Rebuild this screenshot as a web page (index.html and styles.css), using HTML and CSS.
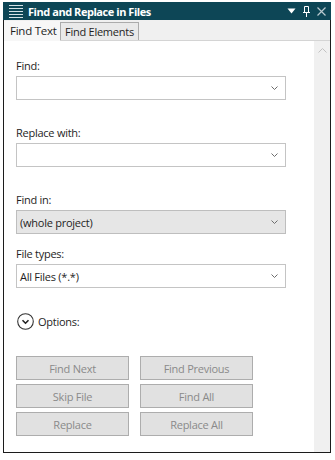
FILE: index.html
```html
<!DOCTYPE html>
<html lang="en">
<head>
   <meta charset="UTF-8">
   <meta name="viewport" content="width=device-width, initial-scale=1.0">
   <title>Find and Replace in Files</title>
   <link rel="stylesheet" href="styles.css">
</head>
<body>
   <div class="window">
      <div class="title-bar">
         <svg class="menu-icon" width="14" height="14" viewBox="0 0 14 14">
            <path d="M0 1.5h14M0 4.5h14M0 7.5h14M0 10.5h14M0 13.5h14" stroke="#d6e2e6" stroke-width="1"/>
         </svg>
         <span class="title">Find and Replace in Files</span>
         <div class="title-tools">
            <svg width="9" height="6" viewBox="0 0 9 6"><path d="M0.5 0.5h8l-4 5z" fill="#ffffff"/></svg>
            <svg width="7" height="11" viewBox="0 0 7 11"><path d="M1.5 0.5v6M5.5 0.5v6M1.5 0.5h4M0 6.5h7M3.5 6.5v4.5" stroke="#ffffff" stroke-width="1" fill="none"/></svg>
            <svg width="9" height="9" viewBox="0 0 9 9"><path d="M0.5 0.5l8 8M8.5 0.5l-8 8" stroke="#b9c9cf" stroke-width="1.2"/></svg>
         </div>
      </div>
      <div class="tab-strip">
         <div class="tab active">Find Text</div>
         <div class="tab">Find Elements</div>
      </div>
      <div class="body">
         <div class="panel">
            <div class="field">
               <label>Find:</label>
               <div class="combo"><span></span><svg class="chev" width="7" height="4" viewBox="0 0 7 4"><path d="M0.5 0.5l3 3 3-3" stroke="#6d6d6d" fill="none"/></svg></div>
            </div>
            <div class="field">
               <label>Replace with:</label>
               <div class="combo"><span></span><svg class="chev" width="7" height="4" viewBox="0 0 7 4"><path d="M0.5 0.5l3 3 3-3" stroke="#6d6d6d" fill="none"/></svg></div>
            </div>
            <div class="field tight">
               <label>Find in:</label>
               <div class="combo readonly"><span>(whole project)</span><svg class="chev" width="7" height="4" viewBox="0 0 7 4"><path d="M0.5 0.5l3 3 3-3" stroke="#6d6d6d" fill="none"/></svg></div>
            </div>
            <div class="field">
               <label>File types:</label>
               <div class="combo"><span>All Files (*.*)</span><svg class="chev" width="7" height="4" viewBox="0 0 7 4"><path d="M0.5 0.5l3 3 3-3" stroke="#6d6d6d" fill="none"/></svg></div>
            </div>
            <div class="options">
               <svg width="17" height="17" viewBox="0 0 17 17">
                  <circle cx="8.5" cy="8.5" r="7.8" stroke="#333333" stroke-width="1.1" fill="none"/>
                  <path d="M5.5 7.2l3 3 3-3" stroke="#222222" stroke-width="1.6" fill="none"/>
               </svg>
               <span>Options:</span>
            </div>
            <div class="buttons">
               <button disabled>Find Next</button>
               <button disabled>Find Previous</button>
               <button disabled>Skip File</button>
               <button disabled>Find All</button>
               <button disabled>Replace</button>
               <button disabled>Replace All</button>
            </div>
         </div>
         <div class="scrollbar">
            <svg width="9" height="5" viewBox="0 0 9 5"><path d="M0.5 4.5l4-4 4 4" stroke="#c2c2c2" fill="none"/></svg>
         </div>
      </div>
   </div>
</body>
</html>
```

FILE: styles.css
```css
body {
   margin: 0;
   background: #ffffff;
   font-family: "Open Sans", "Noto Sans", sans-serif;
   font-size: 11px;
   letter-spacing: -0.25px;
   color: #1e1e1e;
}

.window {
   margin: 2px 0 0 3px;
   width: 328px;
   height: 451px;
   box-sizing: border-box;
   border: 1px solid #1c1c1c;
   border-top: none;
   display: flex;
   flex-direction: column;
}

.title-bar {
   height: 18px;
   margin: 0 -1px;
   background: #0d4656;
   display: flex;
   align-items: center;
   color: #ffffff;
}

.menu-icon {
   margin-left: 6px;
   margin-right: 5px;
}

.title {
   font-weight: bold;
   font-size: 11px;
   letter-spacing: -0.45px;
}

.title-tools {
   margin-left: auto;
   margin-right: 5px;
   display: flex;
   align-items: center;
   gap: 7px;
}

.tab-strip {
   height: 20px;
   background: #f0f0f0;
   border-bottom: 1px solid #d4d4d4;
   display: flex;
   align-items: flex-end;
}

.tab {
   height: 18px;
   line-height: 17px;
   padding: 0 4px;
   box-sizing: border-box;
   border: 1px solid #ababab;
   border-bottom: none;
   background: #e9e9e9;
}

.tab.active {
   height: 20px;
   line-height: 20px;
   width: 56px;
   padding: 0 0 0 6px;
   border: none;
   background: #f7f7f7;
   margin-bottom: -1px;
   font-size: 11.5px;
   white-space: nowrap;
}

.body {
   flex: 1;
   display: flex;
}

.panel {
   flex: 1;
   padding: 16px 0 0 12px;
}

.field {
   margin-bottom: 24px;
}

.field.tight {
   margin-bottom: 11px;
}

label {
   display: block;
   line-height: 17px;
   margin-bottom: 2px;
}

.combo {
   width: 270px;
   height: 24px;
   box-sizing: border-box;
   border: 1px solid #c4c4c4;
   background: #ffffff;
   display: flex;
   align-items: center;
   justify-content: space-between;
   padding: 0 7px 0 3px;
}

.combo.readonly {
   background: #e6e6e6;
   border-color: #bebebe;
}

.options {
   margin-top: 25px;
   display: flex;
   align-items: center;
   gap: 4px;
   padding-left: 1px;
}

.buttons {
   margin-top: 26px;
   display: grid;
   grid-template-columns: 113px 113px;
   column-gap: 11px;
   row-gap: 4px;
}

button {
   height: 24px;
   border: 1px solid #adadad;
   background: #e1e1e1;
   color: #8a8a8a;
   font-family: "Open Sans", "Noto Sans", sans-serif;
   font-size: 11px;
   letter-spacing: -0.25px;
   padding: 0;
}

.scrollbar {
   width: 16px;
   background: #f0f0f0;
   display: flex;
   justify-content: center;
   padding-top: 7px;
   box-sizing: border-box;
   align-items: flex-start;
}
```
